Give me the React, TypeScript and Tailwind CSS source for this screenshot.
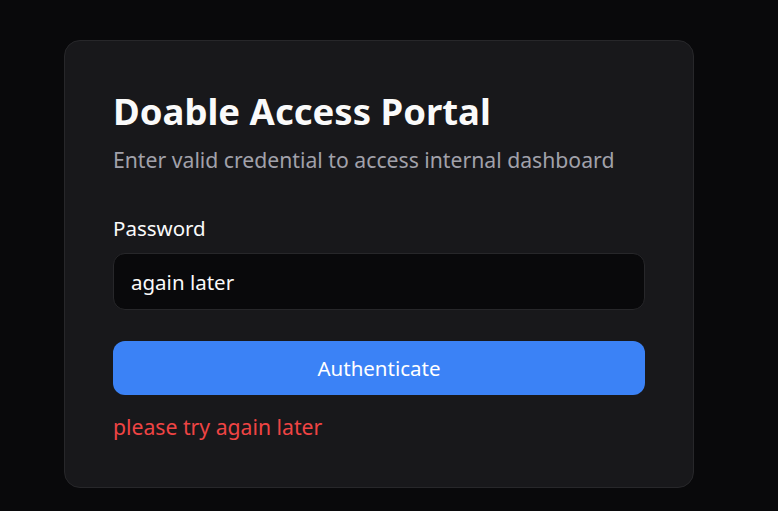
import React, { useState } from 'react'

export default function App() {
  const [password, setPassword] = useState('again later')
  const [error] = useState('please try again later')

  return (
    <div
      className="min-h-[511px] w-full bg-[#09090b] pt-[40px] pl-[64px]"
      style={{ fontFamily: '"Noto Sans", "Open Sans", sans-serif' }}
    >
      <div className="w-[630px] rounded-[16px] border border-[#27272a] bg-[#18181b] px-[48px] pt-[50px] pb-[46px]">
        <h1 className="text-[36.5px] leading-[40px] font-bold text-[#fafafa]">Doable Access Portal</h1>
        <p className="mt-[15px] text-[21.2px] leading-[28px] text-[#a1a1aa]">
          Enter valid credential to access internal dashboard
        </p>

        <form className="mt-[40px] flex flex-col" onSubmit={(e) => e.preventDefault()}>
          <label className="text-[20.5px] leading-[28px] text-[#fafafa]">Password</label>
          <input
            type="text"
            value={password}
            onChange={(e) => setPassword(e.target.value)}
            className="mt-[11px] h-[57px] rounded-[12px] border border-[#27272a] bg-[#09090b] px-[17px] text-[20.5px] text-[#fafafa] outline-none"
          />
          <button
            type="submit"
            className="mt-[31px] h-[54px] rounded-[12px] bg-[#3b82f6] text-[20.5px] text-white"
          >
            Authenticate
          </button>
          <p className="mt-[18px] text-[21.2px] leading-[28px] text-[#ef4444]">{error}</p>
        </form>
      </div>
    </div>
  )
}
